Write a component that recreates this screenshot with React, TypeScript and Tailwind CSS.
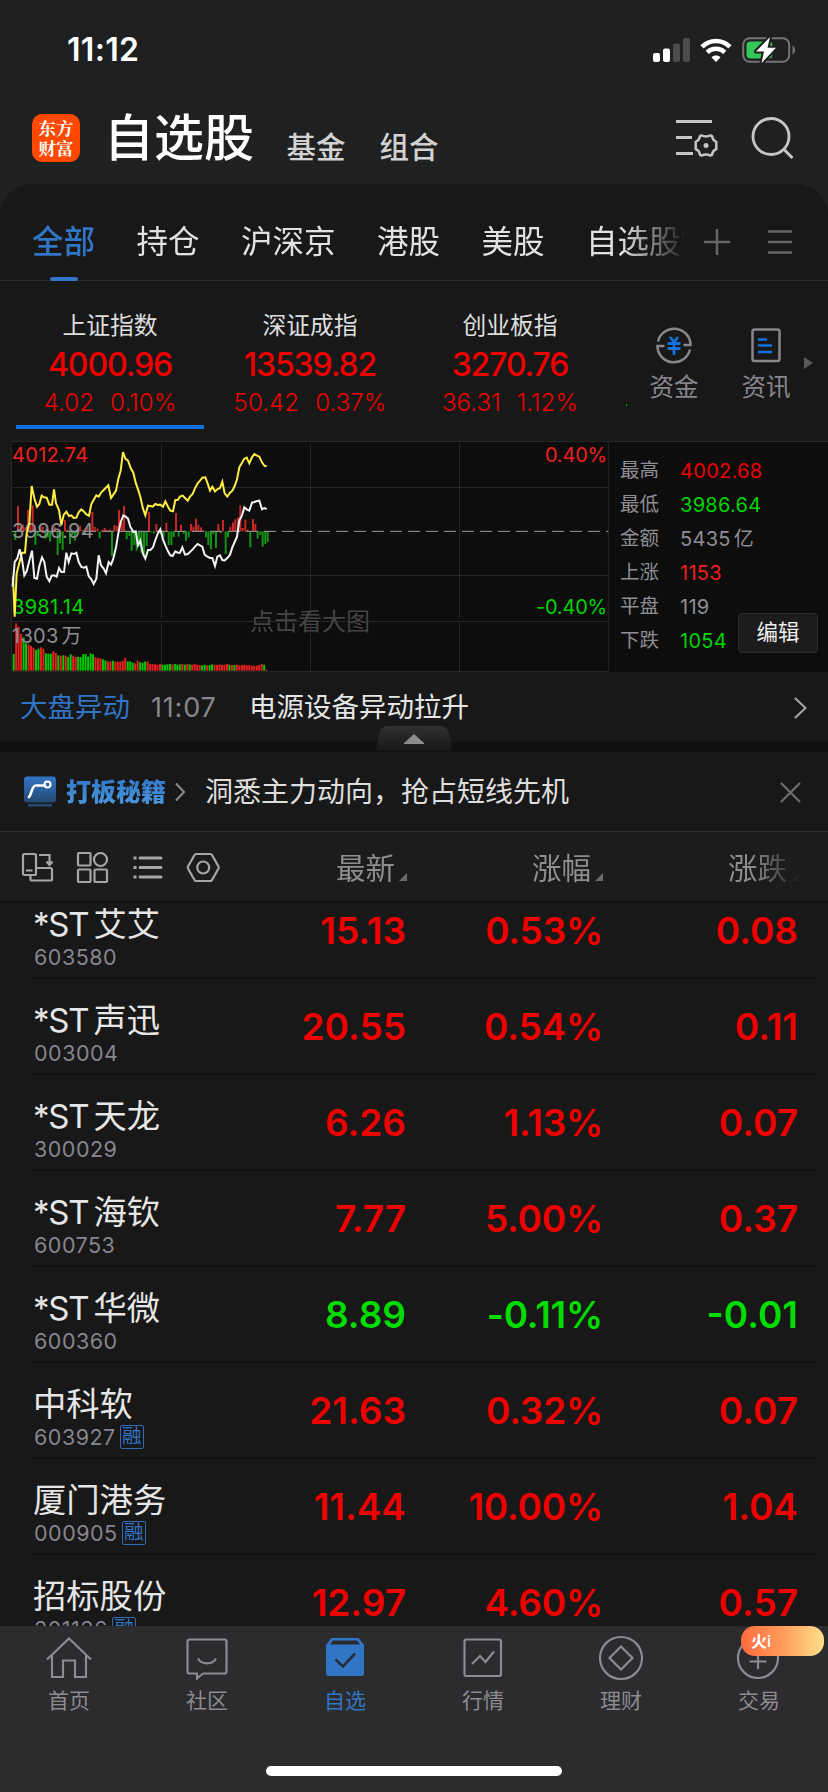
import type { ReactNode } from 'react';

type Quote = {
    name: string;
    code: string;
    price: string;
    percent: string;
    change: string;
    st?: boolean;
    down?: boolean;
    margin?: boolean;
};

const quotes: Quote[] = [
    { name: '艾艾', code: '603580', price: '15.13', percent: '0.53%', change: '0.08', st: true },
    { name: '声迅', code: '003004', price: '20.55', percent: '0.54%', change: '0.11', st: true },
    { name: '天龙', code: '300029', price: '6.26', percent: '1.13%', change: '0.07', st: true },
    { name: '海钦', code: '600753', price: '7.77', percent: '5.00%', change: '0.37', st: true },
    { name: '华微', code: '600360', price: '8.89', percent: '-0.11%', change: '-0.01', st: true, down: true },
    { name: '中科软', code: '603927', price: '21.63', percent: '0.32%', change: '0.07', margin: true },
    { name: '厦门港务', code: '000905', price: '11.44', percent: '10.00%', change: '1.04', margin: true },
    { name: '招标股份', code: '301136', price: '12.97', percent: '4.60%', change: '0.57', margin: true },
];

const indices = [
    { name: '上证指数', value: '4000.96', diff: '4.02', percent: '0.10%', active: true },
    { name: '深证成指', value: '13539.82', diff: '50.42', percent: '0.37%', active: false },
    { name: '创业板指', value: '3270.76', diff: '36.31', percent: '1.12%', active: false },
];

const stats = [
    { label: '最高', value: '4002.68', color: 'text-[#ee0000]' },
    { label: '最低', value: '3986.64', color: 'text-[#00d400]' },
    { label: '金额', value: '5435 亿', color: 'text-[#8e8e93]' },
    { label: '上涨', value: '1153', color: 'text-[#f02020]' },
    { label: '平盘', value: '119', color: 'text-[#8e8e93]' },
    { label: '下跌', value: '1054', color: 'text-[#00d400]' },
];

const YELLOW =
    '39,440 44,560 50,430 66,368 75,368 80,310 88,280 95,168 103,205 111,230 118,222 125,197 132,202 140,203 148,224 156,224 162,178 168,220 177,240 184,285 191,255 199,245 207,258 214,256 221,264 229,263 236,247 244,238 252,245 259,253 267,257 274,222 282,208 289,196 296,200 304,187 311,180 325,166 333,204 340,194 348,182 355,146 362,122 369,66 376,86 384,92 392,114 400,128 407,158 414,178 421,200 429,236 436,256 444,227 451,228 458,230 466,222 473,225 480,224 489,230 496,214 504,230 511,242 519,244 526,210 533,210 540,200 548,197 555,204 563,212 570,200 578,192 585,175 593,160 600,152 607,143 616,142 622,158 630,182 637,170 645,184 652,178 660,174 667,155 674,190 682,200 690,188 697,182 704,168 711,148 718,112 726,98 733,86 740,83 748,100 756,82 763,72 771,77 778,80 786,97 794,108 800,108';
const WHITE =
    '38,470 44,396 52,385 59,358 66,388 73,436 80,424 88,392 96,362 103,444 111,446 118,408 126,382 133,396 140,440 148,454 155,437 163,436 170,440 177,414 184,426 192,426 199,368 206,396 214,370 222,372 229,368 236,396 244,411 252,413 259,410 266,438 274,448 281,462 289,446 296,376 303,406 311,416 318,430 326,396 333,404 340,386 348,352 355,310 362,276 370,256 377,260 384,266 391,290 400,306 407,304 414,346 421,332 429,372 436,386 444,360 451,360 459,352 466,330 473,312 481,298 489,328 496,346 504,364 511,376 518,378 526,364 533,368 540,368 547,352 555,374 563,372 570,366 578,358 585,350 593,342 600,346 607,350 614,374 622,380 630,384 637,384 645,408 652,380 660,376 667,390 674,391 682,384 690,374 697,352 704,336 711,320 718,272 726,256 733,232 740,238 748,242 756,218 763,216 771,213 778,212 786,238 793,234 800,237';

// [x, signed height], positive is drawn above the zero line
const momentum = [
    [46, -26], [54, 76], [62, 14], [69, 20], [76, 12], [84, 64], [91, 18], [98, 78], [106, -40], [113, -14],
    [121, 16], [128, 14], [136, -22], [143, -18], [150, -31], [158, 18], [165, 12], [173, -71], [180, -36], [188, -56],
    [195, 34], [203, 5], [210, -38], [217, -12], [225, -28], [232, -8], [240, 16], [247, 4], [255, -8], [262, 12],
    [270, 10], [277, 58], [284, 13], [292, 8], [299, -21], [306, 4], [314, 10], [321, 4], [329, 6], [336, -74],
    [343, 19], [350, 16], [357, 64], [365, 28], [372, 76], [380, -24], [388, -14], [395, -58], [403, -41], [410, -58],
    [417, -44], [424, -64], [432, -71], [440, -44], [447, 58], [454, -4], [462, -6], [469, 22], [477, 3], [484, -9],
    [491, -18], [499, 25], [506, -41], [514, -41], [521, -17], [528, 55], [536, -16], [543, 20], [551, -7], [558, -28],
    [566, -18], [573, 22], [580, 14], [588, 38], [595, 20], [603, 12], [611, 3], [618, -18], [625, -41], [633, -54],
    [640, -8], [648, -50], [655, 22], [662, -5], [669, 34], [677, -68], [684, -18], [691, 14], [699, 27], [706, 36],
    [714, 42], [721, 78], [728, 10], [736, 35], [743, 5], [751, -48], [759, 37], [766, 22], [773, -22], [781, -11],
    [788, -46], [796, -38], [803, -32],
];

const volume = [
    50, 142, 132, 110, 100, 82, 79, 74, 69, 62, 66, 70, 66, 52, 51, 51, 58, 53, 46, 45, 46, 45, 41, 49, 45, 41, 41, 41,
    49, 50, 42, 52, 49, 41, 37, 37, 34, 31, 28, 28, 30, 27, 27, 27, 30, 38, 28, 28, 24, 22, 30, 25, 24, 27, 27, 20, 20,
    19, 18, 20, 18, 18, 19, 20, 19, 20, 18, 19, 20, 18, 20, 19, 18, 20, 18, 17, 16, 18, 16, 17, 19, 18, 17, 19, 17, 18,
    20, 18, 17, 17, 18, 16, 17, 18, 16, 17, 15, 14, 15, 17, 20, 18, 3,
];
const volumeColors =
    'grrrggrrrggrrgggrrgrgrggrrgggggggrrrggrrgrrrrrgggrrgggrrrrrrggggrgggrgrgrrrrggrggrrrrrrgrgrrrrrrrrrrrgrg';

function StatusBar() {
    return (
        <div className="flex h-[99px] items-center justify-between pr-[32px] pl-[67px]">
            <span className="text-[32px] leading-none font-semibold tracking-[0.3px] text-white">11:12</span>
            <div className="flex items-center gap-[10px]">
                <svg width="38" height="24" viewBox="0 0 38 24">
                    <rect x="0" y="15" width="7" height="9" rx="2" fill="#fff" />
                    <rect x="10" y="10.5" width="7" height="13.5" rx="2" fill="#fff" />
                    <rect x="20" y="5.5" width="7" height="18.5" rx="2" fill="#4b4c4e" />
                    <rect x="30" y="0" width="7" height="24" rx="2" fill="#4b4c4e" />
                </svg>
                <svg width="32" height="24" viewBox="0 0 32 24" fill="none" stroke="#fff" className="-ml-px">
                    <path d="M2 8.8C9.8 1 22.2 1 30 8.8" strokeWidth="4.6" />
                    <path d="M7.2 14.4c5-4.8 12.6-4.8 17.6 0" strokeWidth="4.4" />
                    <path d="M16 24l-4.6-4.7c2.6-2.3 6.6-2.3 9.2 0z" fill="#fff" stroke="none" />
                </svg>
                <svg width="54" height="28" viewBox="0 0 54 28">
                    <rect x="1.2" y="2.2" width="46" height="23.6" rx="6.5" fill="none" stroke="#747577" strokeWidth="2" />
                    <path d="M50.5 9.5c3.3 1.3 3.3 7.7 0 9z" fill="#747577" />
                    <rect x="4.5" y="5.5" width="26" height="17" rx="4" fill="#34c759" />
                    <path d="M28 1L14 15.500h8L19.500 27 34 11.800h-8.500z" fill="#fff" stroke="#1d1f21" strokeWidth="4" strokeLinejoin="round" />
                    <path d="M28 1L14 15.500h8L19.500 27 34 11.800h-8.500z" fill="#fff" />
                </svg>
            </div>
        </div>
    );
}

function Header() {
    return (
        <div className="flex h-[78px] items-center pl-8">
            <div className="flex h-12 w-12 flex-col items-center justify-center rounded-[10px] bg-[#ff4800] font-['Noto_Serif_CJK_SC','Noto_Sans_CJK_SC',sans-serif] text-[17.5px] leading-[20px] font-bold text-white">
                <span>东方</span>
                <span>财富</span>
            </div>
            <span className="ml-[24px] w-[150px] text-[50px] leading-none font-medium text-white">自选股</span>
            <span className="ml-[32.5px] pt-[19px] text-[29.5px] leading-none font-medium text-[#d2d2d2]">基金</span>
            <span className="ml-[34px] pt-[19px] text-[29.5px] leading-none font-medium text-[#d2d2d2]">组合</span>
            <svg className="ml-[236.5px]" width="44" height="40" viewBox="0 0 44 40" fill="none" stroke="#c6c6c6" strokeWidth="3">
                <path d="M1 3.5h36M1 19.5h16M1 35.5h17" />
                <path
                    d="M26.5 17.400q4.500 2 9 0l1.500.8q.5 4 4.300 5.600v7.400q-3.800 1.600-4.300 5.600l-1.500.8q-4.500-2-9 0l-1.500-.8q-.5-4-4.300-5.600v-7.400q3.800-1.600 4.300-5.600z"
                    strokeWidth="2.500"
                    strokeLinejoin="round"
                />
                <circle cx="31" cy="27.500" r="2.500" fill="#c6c6c6" stroke="none" />
            </svg>
            <svg className="ml-[32px]" width="44" height="44" viewBox="0 0 44 44" fill="none" stroke="#c6c6c6" strokeWidth="2.800">
                <circle cx="20" cy="20.500" r="18" />
                <path d="M32.500 33l9 9" strokeWidth="3" />
            </svg>
        </div>
    );
}

function Tabs() {
    return (
        <div className="flex h-[97px] items-center border-b border-[#2d2d2d] pt-[20px] pl-8 text-[31.5px] leading-none text-[#e2e2e2]">
            <div className="flex w-[652px] gap-[41.5px] overflow-hidden whitespace-nowrap py-2 [mask-image:linear-gradient(to_right,#000_590px,transparent_655px)]">
                <span className="font-medium text-[#3175c6]">全部</span>
                <span>持仓</span>
                <span>沪深京</span>
                <span>港股</span>
                <span>美股</span>
                <span>自选股1</span>
            </div>
            <svg className="ml-[19px]" width="28" height="28" viewBox="0 0 28 28" stroke="#666" strokeWidth="2.500">
                <path d="M1 14h26M14 1v26" />
            </svg>
            <svg className="ml-[37px]" width="24" height="26" viewBox="0 0 24 26" stroke="#666" strokeWidth="2.600">
                <path d="M0 2.500h24M0 13h24M0 23.500h24" />
            </svg>
            <i className="absolute top-[93px] left-[50px] h-1 w-7 rounded-sm bg-[#3175c6]" />
        </div>
    );
}

function Indices() {
    return (
        <div className="flex h-[160px] pl-[10px]">
            {indices.map(item => (
                <div key={item.name} className="flex w-[200px] flex-col items-center pt-[27px] text-[#ee0000]">
                    <span className="text-[23.8px] leading-9 text-[#dedede]">{item.name}</span>
                    <span className="text-[32px] leading-[42px] font-medium tracking-[-1.1px]">{item.value}</span>
                    <span className="flex gap-[16px] text-[24px] leading-[33px] font-light tracking-[0.1px]">
                        <span>{item.diff}</span>
                        <span>{item.percent}</span>
                    </span>
                    {item.active && <i className="mt-[6px] h-1 w-[188px] bg-[#0f6fdc]" />}
                </div>
            ))}
            <i className="mt-[123px] -mr-px ml-[16px] h-[2px] w-px bg-[#00b400]" />
            <div className="ml-[2px] flex w-[92px] flex-col items-center pt-[44px] text-[24.5px] leading-[44px] text-[#86868c]">
                <svg width="38" height="40" viewBox="0 0 38 40" fill="none" stroke="#86868c" strokeWidth="2.500">
                    <path d="M3 16.500A16.500 16.500 0 0 1 35.500 18.500v1.500h-7M35 24.500A16.500 16.500 0 0 1 2.500 22.500V21h7" />
                    <path d="M15 12l4 5 4-5M12.500 18.500h13M12.500 23.500h13M19 17v13" stroke="#1272dc" strokeWidth="2.800" />
                </svg>
                <span>资金</span>
            </div>
            <div className="flex w-[92px] flex-col items-center pt-[44px] text-[24.5px] leading-[44px] text-[#86868c]">
                <svg width="30" height="40" viewBox="0 0 30 40" fill="none" stroke="#86868c" strokeWidth="2.500">
                    <rect x="1.500" y="4.500" width="27" height="31.500" rx="2" />
                    <path d="M7 14.500h9M7 20.500h14M7 27h14" stroke="#1272dc" strokeWidth="2.600" />
                </svg>
                <span>资讯</span>
            </div>
            <svg className="mt-[76px] -ml-2" width="9" height="12" viewBox="0 0 9 12">
                <path d="M0 0l9 6-9 6z" fill="#5a5a5c" />
            </svg>
        </div>
    );
}

function Chart() {
    return (
        <div className="flex h-[231px] pl-[11px]">
            <div className="relative w-[598px] bg-[#0d0d0d] text-[20px] leading-none tracking-[0.3px]">
                <svg width="598" height="231" viewBox="33 33 1794 693" className="block">
                    <g fill="none" stroke="#262626" strokeWidth="3">
                        <path d="M34.500 34.500H1825V724.500H34.500zM34.500 172.500H1825M34.500 436.500H1825M34.500 574.500H1825" />
                        <path d="M484.500 42V566M484.500 579V724M931.500 42V566M931.500 579V724M1378.500 42V566M1378.500 579V724" />
                    </g>
                    {momentum.map(([x, h]) => (
                        <rect key={x} x={x - 3} y={h > 0 ? 304 - h : 304} width="6" height={Math.abs(h)} fill={h > 0 ? '#c62828' : '#159315'} />
                    ))}
                    <path d="M36 304H1825" stroke="#a0a0a0" strokeWidth="3" strokeDasharray="36 18" />
                    {volume.map((h, i) => (
                        <rect key={i} x={38 + i * 7.44} y={722 - h} width="6" height={h} fill={volumeColors[i] === 'g' ? '#00c800' : '#e82020'} />
                    ))}
                </svg>
                <span className="absolute top-[4px] left-px text-[#f02020]">4012.74</span>
                <span className="absolute top-[80px] left-px text-[#8e8e93]">3996.94</span>
                <span className="absolute top-[156px] left-px text-[#00d400]">3981.14</span>
                <span className="absolute top-[185px] left-px text-[#8e8e93] [word-spacing:-3px]">1303 万</span>
                <span className="absolute top-[4px] right-[2px] tracking-[-0.2px] text-[#f02020]">0.40%</span>
                <span className="absolute top-[156px] right-[2px] tracking-[-0.2px] text-[#00d400]">-0.40%</span>
                <span className="absolute top-[169px] left-[239px] text-[24px] tracking-normal text-[#444]">点击看大图</span>
                <svg width="598" height="231" viewBox="33 33 1794 693" className="absolute top-0 left-0">
                    <g fill="none" strokeWidth="6" strokeLinejoin="miter">
                        <polyline points={YELLOW} stroke="#ffee44" />
                        <polyline points={WHITE} stroke="#f4f4f4" />
                    </g>
                </svg>
            </div>
            <div className="relative flex-1 border-t border-[#262626] bg-[#0d0d0d] pt-[12px] pl-[11px]">
                {stats.map(s => (
                    <div key={s.label} className="flex h-[34px] items-center leading-none">
                        <span className="w-[60px] text-[19.5px] text-[#8e8e93]">{s.label}</span>
                        <span className={`text-[20px] tracking-[0.3px] [word-spacing:-3px] ${s.color}`}>{s.value}</span>
                    </div>
                ))}
                <button className="absolute right-[10px] bottom-[19px] h-10 w-[80px] rounded-[4px] border border-[#2a2a2a] bg-[#1c1c1c] text-[21.5px] leading-none text-[#efefef]">
                    编辑
                </button>
            </div>
        </div>
    );
}

function Movement() {
    return (
        <div className="relative border-b-[10px] border-[#111]">
            <div className="flex h-[70px] items-center pt-px pl-5 text-[27.5px] leading-none">
                <span className="w-[131px] text-[#3175c6]">大盘异动</span>
                <span className="w-[98px] text-[27px] tracking-[0.8px] text-[#86868c]">11:07</span>
                <span className="flex-1 text-[#e6e6e6]">电源设备异动拉升</span>
                <svg className="mr-[21px]" width="13" height="22" viewBox="0 0 13 22" fill="none" stroke="#a8a8a8" strokeWidth="2">
                    <path d="M1 1l10.500 10L1 21" />
                </svg>
            </div>
            <svg className="absolute top-[54px] left-[375px]" width="78" height="26" viewBox="0 0 78 26">
                <defs>
                    <linearGradient id="handle" x1="0" y1="0" x2="0" y2="1">
                        <stop offset="0" stopColor="#303030" />
                        <stop offset="1" stopColor="#171717" />
                    </linearGradient>
                </defs>
                <path d="M1 25L4 8Q5.500 0 13 0H65Q72.500 0 74 8L77 25z" fill="url(#handle)" />
                <path d="M39 8l10 9v1H29v-1z" fill="#8c8c8c" />
            </svg>
        </div>
    );
}

function Promo() {
    return (
        <div className="flex h-[80px] items-center border-b border-[#2e2e2e] pt-px pl-6 leading-none">
            <svg width="32" height="32" viewBox="0 0 32 32">
                <defs>
                    <linearGradient id="promo" x1="0" y1="0" x2="0" y2="1">
                        <stop offset="0" stopColor="#3277c8" />
                        <stop offset="1" stopColor="#24486f" />
                    </linearGradient>
                </defs>
                <rect y="0.500" width="32" height="26" rx="3" fill="url(#promo)" />
                <path d="M5 21C8 18 7.500 9.500 12 9.500h9" fill="none" stroke="#fff" strokeWidth="2.600" strokeLinecap="round" />
                <circle cx="23.500" cy="8.500" r="3" fill="none" stroke="#fff" strokeWidth="2.200" />
                <rect x="4" y="28" width="24" height="2.500" rx="1" fill="#254b76" />
            </svg>
            <span className="ml-[10px] bg-linear-to-b from-[#3175c6] to-[#4d9be0] bg-clip-text py-1 text-[25px] font-black text-transparent">打板秘籍</span>
            <svg className="ml-[8px]" width="12" height="20" viewBox="0 0 12 20" fill="none" stroke="#8a8a8a" strokeWidth="2">
                <path d="M2 1.500l8 8.500-8 8.500" />
            </svg>
            <span className="ml-[19px] flex-1 text-[28px] text-[#dedede]">洞悉主力动向，抢占短线先机</span>
            <svg className="mr-[27px]" width="21" height="21" viewBox="0 0 21 21" stroke="#6e6e6e" strokeWidth="2.200">
                <path d="M1 1l19 19M20 1L1 20" />
            </svg>
        </div>
    );
}

function SortLabel({ children }: { children: ReactNode }) {
    return (
        <span className="flex items-center gap-[4px]">
            {children}
            <svg width="8" height="8" viewBox="0 0 8 8" className="mt-[18px]">
                <path d="M8 0v8H0z" fill="#6a6a6a" />
            </svg>
        </span>
    );
}

function TableHead() {
    return (
        <div className="flex h-[70px] items-center border-b border-[#0c0c0c] bg-[#1c1c1c] pl-[21px] text-[29.5px] leading-[44px] text-[#8e8e8e]">
            <svg width="200" height="32" viewBox="0 0 200 32" fill="none" stroke="#a6a6a6" strokeWidth="2.200">
                <rect x="2" y="3" width="13" height="21" rx="1.500" />
                <path d="M5 19.500h6.500M18 4h10.500v9.500M25.500 10.500l3 3.500 3-3.500" />
                <path d="M16 17h13.500q1.500 0 1.500 1.500V28q0 1.500-1.500 1.500H11q-1.500 0-1.500-1.500v-3.500" />
                <rect x="57" y="2" width="12.500" height="12.500" rx="1" />
                <circle cx="79.500" cy="8.500" r="6.500" />
                <rect x="57" y="18.500" width="12.500" height="12.500" rx="1" />
                <rect x="73.500" y="18.500" width="12.500" height="12.500" rx="1" />
                <g strokeWidth="3">
                    <path d="M119 7h21M119 16.500h21M119 26h21" strokeLinecap="round" />
                    <path d="M112.500 7h3M112.500 16.500h3M112.500 26h3" />
                </g>
                <path d="M175 3h14.500q1 0 1.500 1l6.500 11.500q.5 1 0 2L191 29q-.5 1-1.500 1H175q-1 0-1.500-1L167 17.500q-.5-1 0-2L173.500 4q.5-1 1.500-1z" />
                <circle cx="182.200" cy="16.500" r="6" />
            </svg>
            <div className="flex flex-1 gap-[125px] pt-[3px] pl-[115px] [mask-image:linear-gradient(to_right,#000_530px,transparent_580px)]">
                <SortLabel>最新</SortLabel>
                <SortLabel>涨幅</SortLabel>
                <SortLabel>涨跌</SortLabel>
            </div>
        </div>
    );
}

function QuoteRow({ quote }: { quote: Quote }) {
    const color = quote.down ? 'text-[#00dc00]' : 'text-[#ee0000]';

    return (
        <div className={`mr-[10px] ml-[33px] flex h-24 shrink-0 items-center border-b border-[#0c0c0c] text-[37px] leading-none font-semibold ${color}`}>
            <div className="flex h-24 w-[192px] flex-col pt-6 font-normal">
                <span className="h-[34px] text-[33.3px] leading-[34px] whitespace-nowrap text-[#e6e6e6]">
                    {quote.st && <span className="mr-[5px] text-[33px] tracking-[-1.2px]">*ST</span>}
                    {quote.name}
                </span>
                <span className="flex items-center pl-px text-[21.5px] leading-8 tracking-[0.5px] text-[#86868c]">
                    {quote.code}
                    {quote.margin && (
                        <span className="ml-[4px] flex h-6 w-6 items-center justify-center rounded-[2px] border border-[#2f6cb5] text-[19.5px] leading-none tracking-normal text-[#3175c6]">
                            融
                        </span>
                    )}
                </span>
            </div>
            <span className="w-[181px] text-right">{quote.price}</span>
            <span className="w-[197px] text-right tracking-[-0.2px]">{quote.percent}</span>
            <span className="w-[195px] text-right">{quote.change}</span>
        </div>
    );
}

function NavItem({ label, active, children }: { label: string; active?: boolean; children: ReactNode }) {
    return (
        <div className="flex w-[138px] flex-col items-center pt-[8px]">
            <svg width="48" height="48" viewBox="0 0 48 48" className="fill-none stroke-[#8b8b91]" strokeWidth="2.200">
                {children}
            </svg>
            <span className={`text-[21px] leading-[37px] ${active ? 'text-[#3175c6]' : 'text-[#8b8b91]'}`}>{label}</span>
        </div>
    );
}

function BottomNav() {
    return (
        <div className="relative flex h-[166px] flex-col bg-[#2c2c2e]">
            <div className="flex">
                <NavItem label="首页">
                    <path d="M2 25.500L24 4.500l22 21M7 21.500V43h11V26.500h12V43h11V21.500" />
                </NavItem>
                <NavItem label="社区">
                    <path d="M6.500 5.500h35q2 0 2 2v30q0 2-2 2H20l-6 5v-5H6.500q-2 0-2-2v-30q0-2 2-2z" />
                    <path d="M15 24.500c3.500 6.500 14.500 6.500 18 0" />
                </NavItem>
                <NavItem label="自选" active>
                    <path d="M10.500 4h27l5.500 7v28q0 3-3 3H8q-3 0-3-3V11z" fill="#3175c6" stroke="none" />
                    <path d="M12 6.500h24l3 4H9z" fill="#2c2c2e" stroke="none" />
                    <path d="M14.500 25.500l7.500 7L34 19.500" stroke="#26303b" strokeWidth="2.600" />
                </NavItem>
                <NavItem label="行情">
                    <rect x="5.500" y="5.500" width="36.500" height="36.500" rx="2" />
                    <path d="M13 30l8-8 5.500 6L35 17.500" />
                </NavItem>
                <NavItem label="理财">
                    <circle cx="24" cy="24" r="21" />
                    <path d="M24 12.500L35.500 24 24 35.500 12.500 24z" />
                </NavItem>
                <NavItem label="交易">
                    <circle cx="23" cy="24" r="20" />
                    <path d="M14.500 27.500h17M23 19v16" />
                </NavItem>
            </div>
            <div className="mx-auto mt-[47px] h-[10px] w-[296px] rounded-full bg-white" />
            <span className="absolute top-0 right-1 h-[30px] w-[83px] rounded-[14px] bg-linear-to-r from-[#ff6a3c] via-[#ff9a5a] to-[#ffe08a] pl-[10px] text-[16px] leading-[31px] font-bold text-white">
                火<span className="font-medium">i</span>
            </span>
        </div>
    );
}

export default function App() {
    return (
        <div className="flex h-[1792px] w-[828px] flex-col overflow-hidden bg-linear-to-b from-[#1d1f21] from-0% to-[#212121] to-12% font-[Inter,'Noto_Sans_CJK_SC',sans-serif]">
            <StatusBar />
            <Header />
            <div className="relative mt-[7px] flex flex-col rounded-t-[32px] bg-[#181818]">
                <Tabs />
                <Indices />
                <Chart />
                <Movement />
                <Promo />
                <TableHead />
                <div className="flex h-[724px] flex-col overflow-hidden">
                    <div className="-mt-[19px]">
                        {quotes.map(q => (
                            <QuoteRow key={q.code} quote={q} />
                        ))}
                    </div>
                </div>
            </div>
            <BottomNav />
        </div>
    );
}
